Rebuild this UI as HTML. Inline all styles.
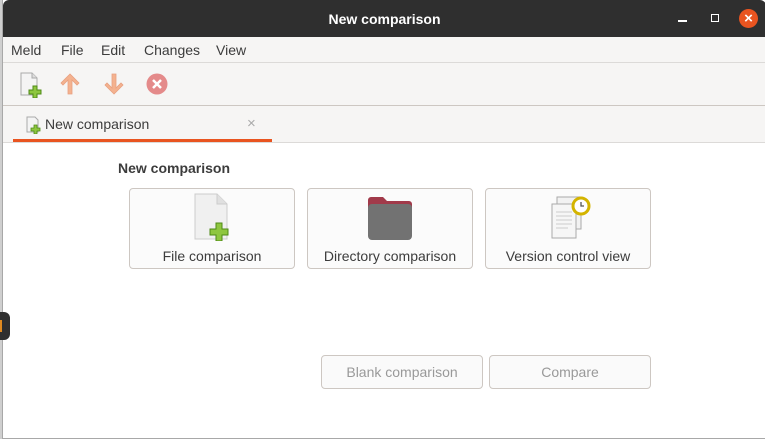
<!DOCTYPE html>
<html><head><meta charset="utf-8"><style>
*{margin:0;padding:0;box-sizing:border-box}
body{width:765px;height:439px;overflow:hidden;background:#cfcfcf;font-family:"Liberation Sans",sans-serif;font-size:14px;color:#3c3c3c;position:relative}
.win{position:absolute;left:2px;top:0;width:763px;height:439px;background:#fff;border-left:1px solid #a8a8a8;border-bottom:1px solid #a8a8a8}
.title{position:absolute;left:0;top:0;width:763px;height:37px;background:#2f2f2f;border-radius:6px 6px 0 0;color:#fff;font-weight:bold;font-size:14px;text-align:center;line-height:38px}
.menu{position:absolute;top:37px;left:0;width:763px;height:26px;background:#f6f5f4;border-bottom:1px solid #dcdad8}
.menu span{position:absolute;top:5px}
.tool{position:absolute;top:63px;left:0;width:763px;height:43px;background:#f6f5f4;border-bottom:1px solid #cdc7c2}
.tabs{position:absolute;top:106px;left:0;width:763px;height:37px;background:#f6f5f4;border-bottom:1px solid #dcdad8}
.btn{position:absolute;border:1px solid #cdc7c2;border-radius:4px;background:#fbfbfb;text-align:center}
</style></head><body>
<div class="win">
<div class="title">New comparison
<div style="position:absolute;left:675px;top:20px;width:9px;height:2px;background:#fff"></div>
<div style="position:absolute;left:708px;top:14px;width:8px;height:8px;border:1.5px solid #fff"></div>
<div style="position:absolute;left:736px;top:9px;width:19px;height:19px;border-radius:50%;background:#e95420;color:#fff;font-size:15px;line-height:19px;font-weight:bold">×</div>
</div>
<div class="menu"><span style="left:8px">Meld</span><span style="left:58px">File</span><span style="left:98px">Edit</span><span style="left:141px">Changes</span><span style="left:213px">View</span></div>
<div class="tool">
<svg style="position:absolute;left:15px;top:9px" width="26" height="26"><path d="M3 1h11l5 5v17H3z" fill="#f4f4f4" stroke="#aaa"/><path d="M14 1v5h5" fill="#ddd" stroke="#aaa"/><path d="M15 14h4v4h4v4h-4v4h-4v-4h-4v-4h4z" fill="#8ec63f" stroke="#4e8a16"/></svg>
<svg style="position:absolute;left:56px;top:9px" width="22" height="24"><path d="M11 2L2 11l2 2 5-5v14h4V8l5 5 2-2z" fill="#f4b28f" stroke="#e8a080" stroke-width=".8"/></svg>
<svg style="position:absolute;left:100px;top:9px" width="22" height="24"><path d="M11 22L2 13l2-2 5 5V2h4v14l5-5 2 2z" fill="#f4b28f" stroke="#e8a080" stroke-width=".8"/></svg>
<svg style="position:absolute;left:143px;top:10px" width="22" height="22"><circle cx="11" cy="11" r="10.5" fill="#e48a8a"/><path d="M7 7l8 8M15 7l-8 8" stroke="#fff" stroke-width="2.5"/></svg>
</div>
<div class="tabs">
<svg style="position:absolute;left:23px;top:10px" width="16" height="18"><path d="M1 1h8l3 3v12H1z" fill="#f4f4f4" stroke="#aaa"/><path d="M8 9h3v3h3v3h-3v3H8v-3H5v-3h3z" fill="#8ec63f" stroke="#4e8a16" stroke-width=".8"/></svg>
<span style="position:absolute;left:42px;top:10px">New comparison</span>
<span style="position:absolute;left:244px;top:9px;color:#aaa;font-size:15px">×</span>
<div style="position:absolute;left:10px;top:33px;width:259px;height:3px;background:#e95420"></div>
</div>
<div style="position:absolute;left:115px;top:160px;font-weight:bold">New comparison</div>
<div class="btn" style="left:126px;top:188px;width:166px;height:81px"><svg style="position:absolute;left:63px;top:4px" width="44" height="48"><path d="M2 1h22l10 10v35H2z" fill="#f0f0f0" stroke="#ccc"/><path d="M24 1v10h10" fill="#e0e0e0" stroke="#ccc"/><path d="M23 30h6v6h6v6h-6v6h-6v-6h-6v-6h6z" fill="#8ec63f" stroke="#4e8a16"/></svg><span style="position:absolute;left:0;right:0;top:59px">File comparison</span></div>
<div class="btn" style="left:304px;top:188px;width:166px;height:81px"><svg style="position:absolute;left:58px;top:7px" width="48" height="46"><path d="M2 4a3 3 0 0 1 3-3h12l4 4h22a3 3 0 0 1 3 3v8H2z" fill="#a13a4a"/><rect x="2" y="8" width="44" height="36" rx="4" fill="#727272"/></svg><span style="position:absolute;left:0;right:0;top:59px">Directory comparison</span></div>
<div class="btn" style="left:482px;top:188px;width:166px;height:81px"><svg style="position:absolute;left:61px;top:5px" width="48" height="50"><rect x="10" y="3" width="24" height="32" fill="#f2f2f2" stroke="#aaa"/><rect x="5" y="10" width="24" height="34" fill="#f6f6f6" stroke="#aaa"/><path d="M9 18h16M9 22h16M9 26h16M9 30h16M9 34h12" stroke="#ccc"/><circle cx="34" cy="12" r="8" fill="#fff" stroke="#d4b400" stroke-width="3"/><path d="M34 8v4h3" stroke="#555" stroke-width="1.3" fill="none"/></svg><span style="position:absolute;left:0;right:0;top:59px">Version control view</span></div>
<div class="btn" style="left:318px;top:355px;width:162px;height:34px;color:#999;line-height:32px;background:#fafafa">Blank comparison</div>
<div class="btn" style="left:486px;top:355px;width:162px;height:34px;color:#999;line-height:32px;background:#fafafa">Compare</div>
</div>
<div style="position:absolute;left:0;top:312px;width:10px;height:28px;background:#2f2f2f;border-radius:0 6px 6px 0"></div>
<div style="position:absolute;left:0;top:320px;width:2px;height:12px;background:#e08a20"></div>
</body></html>
